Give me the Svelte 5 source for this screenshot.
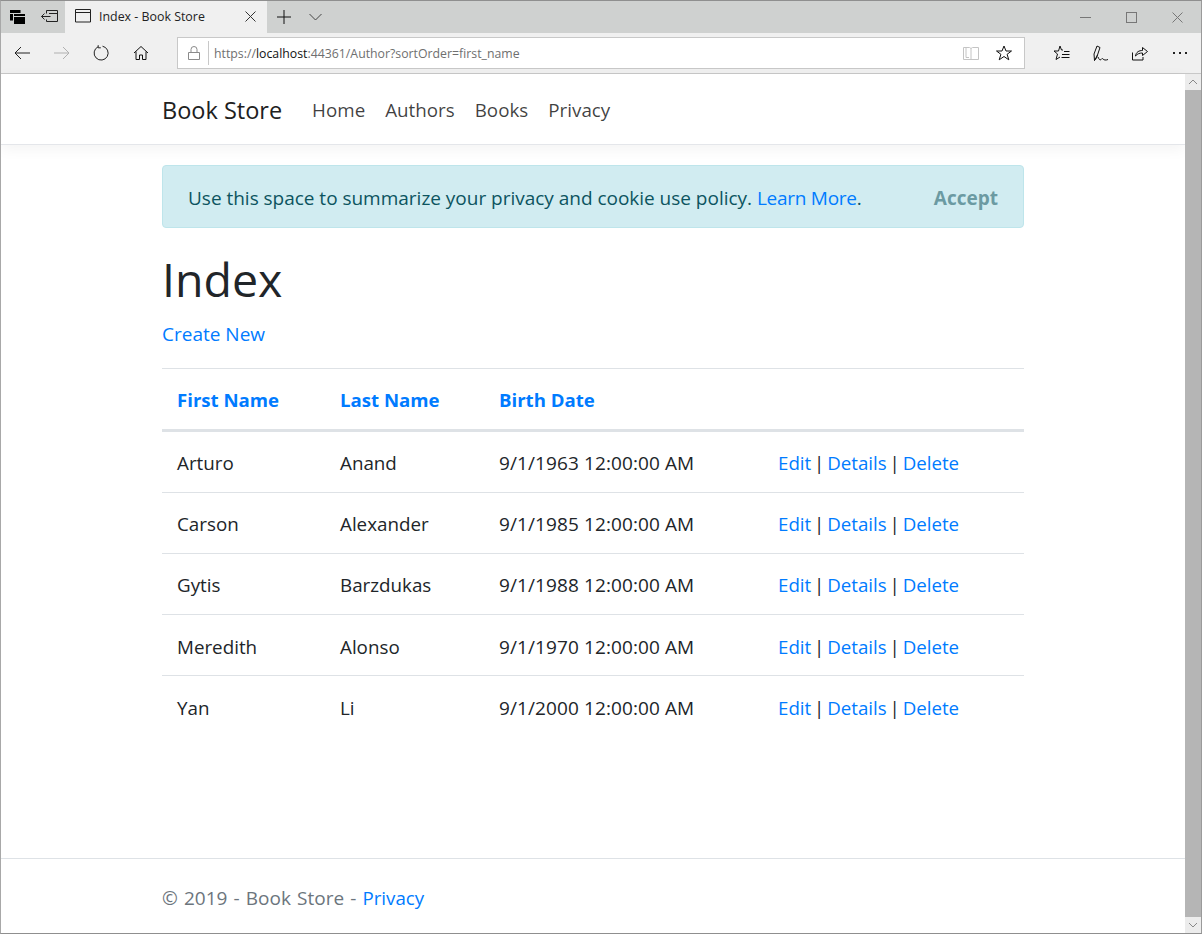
<script>
  const rows = [
    ['Arturo', 'Anand', '9/1/1963 12:00:00 AM'],
    ['Carson', 'Alexander', '9/1/1985 12:00:00 AM'],
    ['Gytis', 'Barzdukas', '9/1/1988 12:00:00 AM'],
    ['Meredith', 'Alonso', '9/1/1970 12:00:00 AM'],
    ['Yan', 'Li', '9/1/2000 12:00:00 AM']
  ];
</script>

<div class="window">
  <header class="tabbar">
    <div class="tb-left">
      <svg class="ic1" width="16" height="15" viewBox="0 0 16 15"><path d="M0 0h10.500v3H0zM0 4h10.500v6.500H0z" fill="#000"/><rect x="3.500" y="3.500" width="12" height="11" fill="#000" stroke="#cfd1d0"/><path d="M4 6.500h11" stroke="#cfd1d0"/></svg>
      <svg class="ic2" width="18" height="14" viewBox="0 0 18 14"><path d="M5.500 3.500V.5h11v11h-11V9.500M8 3.500h8.500M.5 6.500h9M3.500 3.500l-3 3 3 3" fill="none" stroke="#222"/></svg>
    </div>
    <div class="tab">
      <svg width="16" height="14" viewBox="0 0 16 14"><path d="M.5.5h15v12.500h-15zM.5 3.500h15" fill="none" stroke="#222"/></svg>
      <span class="tab-title">Index - Book Store</span>
      <svg class="tab-x" width="11" height="11" viewBox="0 0 11 11"><path d="M.5.500l10 10M10.500.500l-10 10" stroke="#333"/></svg>
    </div>
    <svg class="plus" width="14" height="14" viewBox="0 0 14 14"><path d="M7 0v14M0 7h14" stroke="#111"/></svg>
    <svg class="chev" width="13" height="8" viewBox="0 0 13 8"><path d="M.5 1l6 6 6-6" fill="none" stroke="#444"/></svg>
    <div class="winctl">
      <svg width="11" height="11" viewBox="0 0 11 11"><path d="M0 5.500h11" stroke="#777"/></svg>
      <svg width="11" height="11" viewBox="0 0 11 11"><rect x=".5" y=".5" width="10" height="10" fill="none" stroke="#777"/></svg>
      <svg width="11" height="11" viewBox="0 0 11 11"><path d="M.5.500l10 10M10.500.500l-10 10" stroke="#777"/></svg>
    </div>
  </header>

  <div class="toolbar">
    <svg class="t-back" width="16" height="14" viewBox="0 0 16 14"><path d="M16 7H1M7 1L1 7l6 6" fill="none" stroke="#222"/></svg>
    <svg class="t-fwd" width="16" height="14" viewBox="0 0 16 14"><path d="M0 7h15M9 1l6 6-6 6" fill="none" stroke="#b0b0b0"/></svg>
    <svg class="t-ref" width="16" height="16" viewBox="0 0 16 16"><path d="M5 1.800A7 7 0 1 0 9.500 1.200M5.200 .2v2.600h2.600" fill="none" stroke="#222"/></svg>
    <svg class="t-home" width="16" height="16" viewBox="0 0 16 16"><path d="M1 8l7-6.500L15 8M3 6.500V14.500h3.500V10h3v4.500H13V6.500" fill="none" stroke="#111"/></svg>
    <div class="address">
      <svg class="lock" width="12" height="14" viewBox="0 0 12 14"><path d="M.5 6.500h11v7H.5zM3 6.500V3.500a3 3 0 0 1 6 0v3" fill="none" stroke="#8a8a8a"/></svg>
      <span class="sep"></span>
      <span class="url">https://<b>localhost</b>:44361/Author?sortOrder=first_name</span>
      <svg class="book" width="16" height="14" viewBox="0 0 16 14"><path d="M.5 1.500h6l1.500 1 1.500-1h6v12h-15zM8 2.500v11M3 1.500v10h3" fill="none" stroke="#c4c4c4"/></svg>
      <svg class="star" width="16" height="16" viewBox="0 0 16 16"><path d="M8 1l2 5h5.500l-4.400 3.300 1.700 5.500L8 11.500l-4.800 3.300 1.700-5.500L.5 6H6z" fill="none" stroke="#111"/></svg>
    </div>
    <svg class="t-fav" width="17" height="16" viewBox="0 0 17 16"><path d="M7 1l1.500 4h1.500M1 6h4.500L7 1M1 6l3.500 3-1.500 5.500 4-2.500M11 6.500h5.500M9 9.500h7.500M8.500 12.500h8" fill="none" stroke="#111"/></svg>
    <svg class="t-pen" width="16" height="17" viewBox="0 0 16 17"><path d="M1.500 15.500L1 9l3-8 3 1.500-2.500 7.500zM4.500 10C4 12 3 14 1.500 15.500M5 12c1 2.500 2 3.500 3 2.500s1-1.500 2-.5 2.500 1.500 5 .5" fill="none" stroke="#111"/></svg>
    <svg class="t-share" width="16" height="15" viewBox="0 0 16 15"><path d="M.5 6.500v7.500H11v-3M3.500 10C4 6 7 4.500 10.500 4.500V1.500L15.500 5.500l-5 4V7C8 7 5.500 7.500 3.500 10z" fill="none" stroke="#111"/></svg>
    <svg class="t-more" width="16" height="2" viewBox="0 0 16 2"><path d="M1 0h2v2H1zM7 0h2v2H7zM13 0h2v2h-2z" fill="#222"/></svg>
  </div>

  <div class="viewport">
    <div class="page">
      <nav class="nav">
        <div class="container nav-in">
          <a class="brand" href="#b">Book Store</a>
          <a href="#h">Home</a>
          <a href="#a">Authors</a>
          <a href="#k">Books</a>
          <a href="#p">Privacy</a>
        </div>
      </nav>

      <main class="container main">
        <div class="alert">
          <span class="msg">Use this space to summarize your privacy and cookie use policy. <a class="learn" href="#l">Learn More</a>.</span>
          <button class="accept">Accept</button>
        </div>
        <h1>Index</h1>
        <p class="create"><a href="#n">Create New</a></p>
        <table>
          <colgroup><col class="c1" /><col class="c2" /><col class="c3" /><col class="c4" /></colgroup>
          <thead>
            <tr>
              <th><a href="#f">First Name</a></th>
              <th><a href="#s">Last Name</a></th>
              <th><a href="#d">Birth Date</a></th>
              <th></th>
            </tr>
          </thead>
          <tbody>
            {#each rows as r}
              <tr>
                <td class="name">{r[0]}</td>
                <td class="name">{r[1]}</td>
                <td class="date">{r[2]}</td>
                <td class="actions"><a href="#e">Edit</a> | <a href="#t">Details</a> | <a href="#x">Delete</a></td>
              </tr>
            {/each}
          </tbody>
        </table>
      </main>

      <footer class="footer">
        <div class="container">© 2019 - Book Store - <a class="fp" href="#p">Privacy</a></div>
      </footer>
    </div>

    <div class="scrollbar">
      <div class="sb-btn"><svg width="10" height="6" viewBox="0 0 10 6"><path d="M1 5l4-4 4 4" fill="none" stroke="#888"/></svg></div>
      <div class="sb-thumb"></div>
      <div class="sb-btn"><svg width="10" height="6" viewBox="0 0 10 6"><path d="M1 1l4 4 4-4" fill="none" stroke="#888"/></svg></div>
    </div>
  </div>
</div>

<style>
  :global(body) {
    margin: 0;
    background: #fff;
  }
  .window {
    width: 1202px;
    height: 934px;
    box-sizing: border-box;
    border: 1px solid #8f8f8f;
    border-left-color: #a8a8a8;
    border-right-color: #9a9a9a;
    display: flex;
    flex-direction: column;
    overflow: hidden;
    font-family: "Open Sans", "Noto Sans", sans-serif;
    color: #212529;
  }
  svg { display: block; flex: none; }
  .tabbar {
    height: 32px;
    flex: none;
    background: #cfd1d0;
    display: flex;
    align-items: center;
  }
  .tb-left { width: 64px; display: flex; align-items: center; }
  .ic1 { margin-left: 9px; }
  .ic2 { margin-left: 15px; }
  .tab {
    width: 202px;
    height: 32px;
    background: #f0f0f0;
    display: flex;
    align-items: center;
    padding-left: 10px;
    padding-bottom: 2px;
    box-sizing: border-box;
  }
  .tab-title {
    margin-left: 8px;
    font-size: 12.400px;
    color: #222;
    white-space: nowrap;
    width: 142px;
  }
  .tab-x { margin-left: 4px; }
  .plus { margin-left: 10px; margin-bottom: 1px; }
  .chev { margin-left: 18px; }
  .winctl {
    margin-left: auto;
    display: flex;
    align-items: center;
    gap: 35px;
    padding-right: 18px;
  }
  .toolbar {
    height: 41px;
    flex: none;
    box-sizing: border-box;
    background: #f0f0f0;
    border-bottom: 1px solid #c8c8c8;
    display: flex;
    align-items: center;
  }
  .t-back { margin-left: 13px; }
  .t-fwd { margin-left: 24px; }
  .t-ref { margin-left: 23px; }
  .t-home { margin-left: 24px; }
  .address {
    margin-left: 28px;
    width: 848px;
    height: 32px;
    box-sizing: border-box;
    background: #fff;
    border: 1px solid #c8c8c8;
    display: flex;
    align-items: center;
  }
  .lock { margin-left: 10px; }
  .sep { width: 1px; height: 24px; background: #c8c8c8; margin-left: 8px; }
  .url {
    margin-left: 5px;
    font-size: 12.300px;
    color: #6f6f6f;
    white-space: nowrap;
  }
  .url b { font-weight: 400; color: #111; }
  .book { margin-left: auto; }
  .star { margin-left: 17px; margin-right: 12px; }
  .t-fav { margin-left: 28px; }
  .t-pen { margin-left: 23px; }
  .t-share { margin-left: 23px; }
  .t-more { margin-left: 24px; }

  .viewport {
    flex: 1;
    display: flex;
    min-height: 0;
  }
  .page {
    flex: 1;
    display: flex;
    flex-direction: column;
    font-size: 19px;
    min-width: 0;
  }
  .container {
    width: 862px;
    margin-left: 161px;
  }
  a { color: #007bff; text-decoration: none; }
  .nav {
    height: 71px;
    flex: none;
    box-sizing: border-box;
    border-bottom: 1px solid #e4e6ea;
    box-shadow: 0 4px 14px rgba(0, 0, 0, 0.05);
  }
  .nav-in {
    height: 100%;
    display: flex;
    align-items: center;
    padding-top: 1px;
    box-sizing: border-box;
  }
  .nav-in a { color: rgba(0, 0, 0, 0.75); margin-right: 20px; font-size: 18.800px; }
  .nav-in a.brand { color: #212121; font-size: 23.500px; margin-right: 30px; }
  .main { flex: 1; }
  .alert {
    margin-top: 20px;
    height: 63px;
    box-sizing: border-box;
    background: #d1ecf1;
    border: 1px solid #bee5eb;
    border-radius: 4px;
    color: #0c5460;
    display: flex;
    align-items: center;
    justify-content: space-between;
    padding: 2px 25px 0;
  }
  .msg { word-spacing: -0.1px; }
  .learn { letter-spacing: -0.25px; }
  .accept {
    border: 0;
    background: none;
    padding: 0;
    font: inherit;
    font-weight: 700;
    color: #6b9aa2;
  }
  h1 {
    margin: 19px 0 0;
    font-size: 46.500px;
    font-weight: 400;
    line-height: 65px;
    color: #212529;
  }
  .create { margin: 9px 0 0; line-height: 27px; }
  table {
    margin-top: 20px;
    width: 862px;
    table-layout: fixed;
    border-collapse: collapse;
  }
  .c1 { width: 163px; }
  .c2 { width: 159px; }
  .c3 { width: 279px; }
  .c4 { width: 261px; }
  th, td {
    text-align: left;
    padding: 0 15px;
    box-sizing: border-box;
    white-space: nowrap;
  }
  th {
    height: 62px;
    border-top: 1px solid #dee2e6;
    border-bottom: 3px solid #dee2e6;
    font-weight: 700;
    font-size: 18.600px;
  }
  td {
    height: 61px;
    line-height: 26px;
    vertical-align: baseline;
    padding-top: 18px;
    border-bottom: 1px solid #dee2e6;
    color: #212529;
  }
  tbody tr:first-child td { height: 62px; }
  tbody tr:nth-child(n+4) td { padding-top: 19px; }
  .name { font-size: 18.800px; }
  .date { letter-spacing: 0.1px; }
  .actions { font-size: 18.700px; word-spacing: -2px; }
  tbody tr:last-child td { border-bottom: 0; }
  .footer {
    height: 75px;
    flex: none;
    box-sizing: border-box;
    border-top: 1px solid #dee2e6;
    padding-top: 4px;
    color: #6c757d;
    display: flex;
    align-items: center;
    word-spacing: 1.200px;
  }
  .fp { word-spacing: 0; font-size: 18.700px; }
  .scrollbar {
    width: 16px;
    flex: none;
    display: flex;
    flex-direction: column;
    background: #bcbcbc;
  }
  .sb-btn {
    height: 16px;
    flex: none;
    background: #ececec;
    display: flex;
    align-items: center;
    justify-content: center;
  }
  .sb-thumb { flex: 1; background: #b5b5b5; }
</style>
